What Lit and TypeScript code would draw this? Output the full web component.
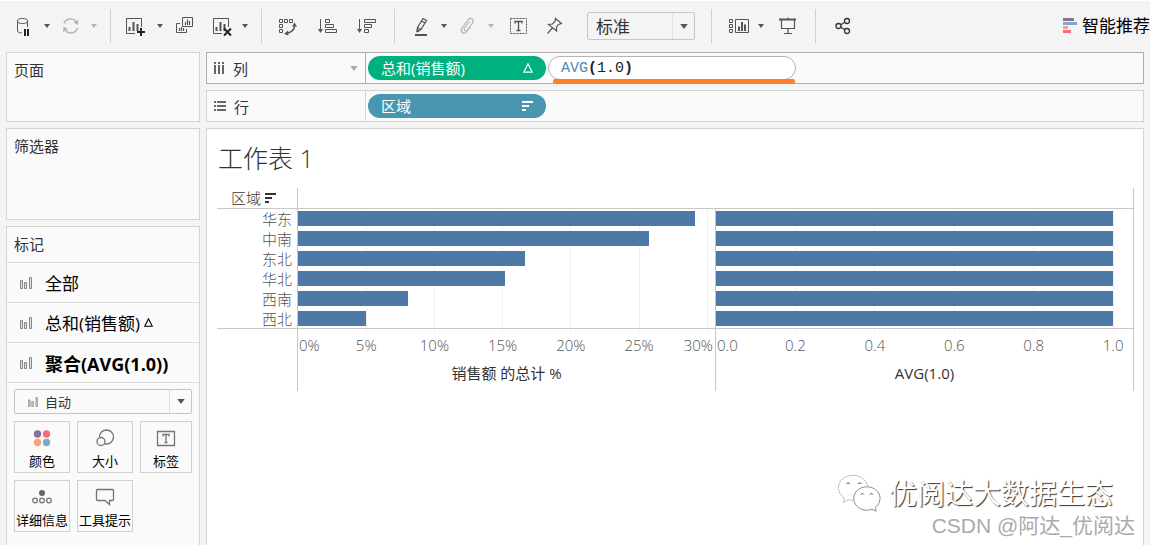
import { LitElement, html, svg, css } from "lit";
import { customElement, property } from "lit/decorators.js";

const FONT = css`"Open Sans", "Noto Sans CJK SC", sans-serif`;

const caret = html`<svg class="caret" width="6" height="4" viewBox="0 0 6 4"><path d="M0 0H6L3 4Z" fill="currentColor" /></svg>`;

const delta = (size: number) => html`<svg width=${size} height=${size} viewBox="0 0 10 10" fill="none" stroke="currentColor" stroke-width="1.2"><path d="M5 .8L9.2 9.2H.8Z" /></svg>`;

const sortGlyph = html`<svg width="11" height="10" viewBox="0 0 11 10" fill="currentColor" shape-rendering="crispEdges"><path d="M0 0H11V2H0ZM0 4H7V6H0ZM0 8H4V10H0Z" /></svg>`;

const markGlyph = html`<svg width="12" height="12" viewBox="0 0 12 12" fill="#e6e6e6" stroke="#858585"><path d="M.5 3.5H2.5V11.5H.5ZM4.5 5.5H6.5V11.5H4.5ZM9.5 .5H11.5V11.5H9.5Z" /></svg>`;

const sheetFrame = svg`<path d="M12 19.5H3.5V4.5H18.5V13" /><path d="M6.500 17V13M10.500 17V8M14.500 17V10" stroke-width="2" />`;

const icons: Record<string, unknown> = {
  data: svg`<ellipse cx="10.5" cy="7" rx="5" ry="2.5" /><path d="M5.5 7V17C6 18.3 7.5 19 10 19M15.5 7V13" /><path d="M13 15V22M16 15V22" stroke="#222" stroke-width="2" />`,
  refresh: svg`<path d="M5 9.5A7 7 0 0 1 17 7.5M18.500 14A7 7 0 0 1 6.500 16.500" stroke-width="1.4" /><path d="M19.500 5.500L19 11L14.500 8.500ZM4 18L4.500 12.500L9 15Z" fill="currentColor" stroke="none" />`,
  add: svg`<g transform="translate(-2 0)">${sheetFrame}</g><path d="M12 18H20M16 14V22" stroke="#222" stroke-width="2" />`,
  duplicate: svg`<path d="M10.500 3.500H20.500V12.500H10.500Z" /><path d="M8 9.500H4.500V18.500H14.500V15" /><path d="M13.500 11V8M15.500 11V5.500M17.500 11V7M7.500 17V14M9.500 17V13M11.500 17V14" stroke-width="1.200" />`,
  clear: svg`${sheetFrame}<path d="M14 14.500L21 21.500M21 14.500L14 21.500" stroke="#222" stroke-width="2" />`,
  swap: svg`<path d="M3.500 5.500H6.500V8.500H3.500ZM8.500 5.500H11.500V8.500H8.500ZM13.500 5.500H16.500V8.500H13.500ZM3.500 10.500H6.500V13.500H3.500ZM3.500 15.500H6.500V18.500H3.500Z" /><path d="M18.500 12C18.500 16 15 18.500 10 19.500" stroke-width="1.500" /><path d="M18.500 8.500L21 12.500H16ZM8 20L12 16.500L12.500 21.500Z" fill="currentColor" stroke="none" />`,
  asc: svg`<path d="M4.500 5V18M9.500 5.500H13.500V8.500H9.500ZM9.500 10.500H17.500V13.500H9.500ZM9.500 15.500H20.500V18.500H9.500Z" /><path d="M2 15H7L4.500 19Z" fill="currentColor" stroke="none" />`,
  desc: svg`<path d="M5.500 5V18M10.500 5.500H21.500V8.500H10.500ZM10.500 10.500H17.500V13.500H10.500ZM10.500 15.500H14.500V18.500H10.500Z" /><path d="M3 15H8L5.500 19Z" fill="currentColor" stroke="none" />`,
  pen: svg`<path d="M6 21H18" stroke-width="2" /><path d="M14 4.500L17.500 6.500L12 15.500L8 17.500L8.500 13.500ZM8.500 13.500L12 15.500M12.500 7L16 9" stroke-width="1.200" /><path d="M8 18L8.300 15.500L10.500 16.700Z" fill="currentColor" />`,
  clip: svg`<path d="M13.500 7.500L8.500 14C7 16.500 10 18 11.500 16L16.500 9C18.500 5.500 14.500 3 12.300 5.700L6 14C3.500 18.500 8.500 20.500 10.500 18L14.500 13" stroke-width="1.200" />`,
  label: svg`<path d="M3.500 4.500H19.500V19.500H3.500Z" stroke-dasharray="2 1" /><path d="M8 9.500V7.500H15V9.500M11.500 7.500V16M9.500 16.500H13.500" stroke-width="1.300" />`,
  pin: svg`<path d="M10.500 4.500L16.500 9.500L13.500 10.500L11.500 13L11.500 17L3.500 10.500L7.500 10L10 7.500ZM7.300 14L2.500 19.500" stroke-width="1.200" />`,
  cards: svg`<path d="M3.500 5.500H6.500V8.500H3.500ZM3.500 10.500H6.500V13.500H3.500ZM3.500 15.500H6.500V18.500H3.500ZM9.500 5.500H22.500V18.500H9.500Z" /><path d="M13 17V12.500M16 17V8M19 17V10.500" stroke-width="2" />`,
  present: svg`<path d="M2 5.500H19" stroke-width="2" /><path d="M4.500 6V14.500H17.500V6M11 3.500V5M11 15V19M7 19.500H15" stroke-width="1.200" />`,
  share: svg`<g stroke="#333" stroke-width="1.300"><circle cx="8.500" cy="12" r="2.500" /><circle cx="17" cy="7" r="2.500" /><circle cx="17" cy="17" r="2.500" /><path d="M10.700 10.700L14.800 8.300M10.700 13.300L14.800 15.700" /></g>`,
};

interface Mark { label: string; at: number; anchor?: string }

@customElement("tool-button")
class ToolButton extends LitElement {
  @property() icon = "";
  @property() label = "";
  @property({ type: Boolean }) menu = false;
  @property({ type: Boolean }) dim = false;
  static styles = css`
    :host { display: flex; gap: 5px; flex: none; color: #555; }
    :host([dim]) { color: #b4b4b4; }
    button { display: flex; align-items: center; justify-content: center; border: 0; padding: 0; background: none; color: inherit; width: 24px; height: 24px; }
    .drop { width: 12px; }
  `;
  render() {
    return html`<button aria-label=${this.label}>
        <svg width="24" height="24" viewBox="0 0 24 24" fill="none" stroke="currentColor">${icons[this.icon]}</svg>
      </button>
      ${this.menu ? html`<button class="drop" aria-label=${this.label + "菜单"}>${caret}</button>` : ""}`;
  }
}

@customElement("bar-pane")
class BarPane extends LitElement {
  @property({ attribute: false }) values: number[] = [];
  @property({ attribute: false }) ticks: Mark[] = [];
  @property({ type: Number }) max = 1;
  @property() caption = "";
  static styles = css`
    :host { display: block; min-width: 0; border-left: 1px solid #c8c8c8; }
    svg { display: block; font-family: ${FONT}; font-size: 15px; }
    .grid { stroke: #f0f0f0; shape-rendering: crispEdges; }
    .bar { fill: #4e79a7; shape-rendering: crispEdges; }
    .rule { stroke: #c8c8c8; shape-rendering: crispEdges; }
    .tick { fill: #555; font-weight: 300; }
    .caption { fill: #333; font-weight: 400; }
  `;
  render() {
    const pct = (v: number) => `${(v / this.max) * 100}%`;
    return html`<svg width="100%" height="182" role="img" aria-label=${this.caption}>
      ${this.ticks.map((t) => (t.at > 0 ? svg`<line class="grid" x1=${pct(t.at)} x2=${pct(t.at)} y1="0" y2="124" />` : ""))}
      ${this.values.map((v, i) => svg`<rect class="bar" x="0" y=${i * 20 + 2} width=${pct(v)} height="15" />`)}
      <line class="rule" x1="0" x2="100%" y1="119.5" y2="119.5" />
      ${this.ticks.map((t) => {
        const x = t.anchor === "start" ? "1" : t.anchor === "end" ? "99.500%" : pct(t.at);
        return svg`<text class="tick" x=${x} y="142" text-anchor=${t.anchor ?? "middle"}>${t.label}</text>`;
      })}
      <text class="caption" x="50%" y="170" text-anchor="middle">${this.caption}</text>
    </svg>`;
  }
}

@customElement("app-root")
class AppRoot extends LitElement {
  static styles = css`
    :host { display: block; font-family: ${FONT}; font-size: 15px; color: #333; }
    * { box-sizing: border-box; }
    button, select, input { font-family: inherit; color: inherit; margin: 0; }
    .page { position: relative; display: flex; flex-direction: column; height: 100vh; overflow: hidden; background: #f4f4f4; border-top: 1px solid #fff; }
    .toolbar { display: flex; align-items: center; flex: none; height: 50px; padding-left: 12px; margin-bottom: 1px; }
    .s6 { margin-left: 6px; }
    .s10 { margin-left: 10px; }
    .s14 { margin-left: 14px; }
    .s16 { margin-left: 16px; }
    .sep { flex: none; width: 1px; height: 34px; background: #cfcfcf; }
    .select { display: grid; grid-template-columns: minmax(0, 1fr) 22px; align-items: center; border: 1px solid #c6c6c6; border-radius: 2px; color: #555; }
    .select select { grid-area: 1 / 1 / 2 / 3; appearance: none; width: 100%; height: 100%; border: 0; background: none; color: #333; }
    .select .drop { grid-area: 1 / 2; display: flex; align-items: center; justify-content: center; height: 100%; border-left: 1px solid #e0e0e0; pointer-events: none; }
    .select .caret { width: 8px; height: 5px; }
    .fit { flex: none; width: 108px; height: 28px; margin-left: 18px; }
    .fit select { font-size: 17px; padding: 0 8px; }
    .smart { display: flex; align-items: center; gap: 5px; margin-left: auto; flex: none; border: 0; background: none; padding: 0; font-size: 17px; line-height: 24px; color: #000; }
    .work { display: grid; grid-template-columns: 194px minmax(0, 1fr); gap: 6px; padding: 0 6px; flex: 1; min-height: 0; }
    .side, .main { display: flex; flex-direction: column; gap: 6px; min-height: 0; }
    .card { background: #fafafa; border: 1px solid #d4d4d4; }
    .card h2 { margin: 0; padding: 6px 7px; font-size: 15px; font-weight: 400; line-height: 23px; }
    .pages { height: 70px; flex: none; }
    .filters { height: 92px; flex: none; }
    .marks { flex: 1; border-bottom: 0; }
    .layer { display: flex; align-items: center; width: 100%; height: 40px; border: 0; border-top: 1px solid #dcdcdc; background: none; padding: 0 13px; font-size: 17px; color: #000; text-align: left; }
    .layer span { margin: 0 4px 0 13px; }
    .layer.on { font-weight: 700; font-size: 18px; }
    .panel { border-top: 1px solid #dcdcdc; padding: 6px 7px; }
    .kind { height: 25px; margin-bottom: 7px; }
    .kind select { font-size: 13px; padding: 0 30px; }
    .kind .glyph { grid-area: 1 / 1; display: flex; padding-left: 13px; pointer-events: none; }
    .tiles { display: grid; grid-template-columns: 56px 56px 52px; gap: 7px; }
    .tile { display: flex; flex-direction: column; align-items: center; gap: 4px; height: 52px; border: 1px solid #d0d0d0; background: none; padding: 6px 0 0; font-size: 13px; line-height: 18px; white-space: nowrap; color: #000; }
    .shelf { display: grid; grid-template-columns: 159px minmax(0, 1fr); height: 32px; flex: none; }
    .shelf.active { border-color: #adadad; }
    .name { display: flex; align-items: center; gap: 8px; padding: 0 7px; border-right: 1px solid #d4d4d4; color: #333; }
    .active .name { border-color: #adadad; }
    .name .caret { margin-left: auto; color: #aaa; width: 8px; height: 5px; }
    .pills { display: flex; align-items: center; gap: 2px; padding: 0 2px; }
    .pill { display: flex; align-items: center; justify-content: space-between; width: 178px; height: 24px; border: 0; border-radius: 12px; padding: 0 13px; font-size: 15px; line-height: 24px; color: #fff; }
    .measure { background: #00b180; }
    .dimension { background: #4996b2; }
    .formula { position: relative; display: grid; align-items: center; width: 248px; height: 24px; border: 1px solid #b4b4b4; border-radius: 12px; background: #fff; padding: 0 12px; font: 15px "Liberation Mono", monospace; color: #222; }
    .formula span, .formula input { grid-area: 1 / 1; }
    .formula input { width: 100%; border: 0; padding: 0; outline: 0; background: none; font: inherit; color: transparent; caret-color: #222; }
    .formula i { font-style: normal; color: #4a8bb0; }
    .stroke { position: absolute; left: 4px; right: 0; bottom: -5px; height: 5px; border-radius: 2px; background: #ff7f27; }
    .sheet { flex: 1; min-height: 0; background: #fff; border-bottom: 0; padding: 12px 9px 0 10px; }
    .sheet h1 { margin: 0 1px; font-size: 25px; line-height: 34px; font-weight: 300; color: #333; }
    .chart { display: grid; grid-template-columns: 80px minmax(0, 1fr) minmax(0, 1fr); margin-top: 13px; border-right: 1px solid #c8c8c8; font-weight: 300; }
    .field { display: flex; align-items: center; justify-content: flex-end; gap: 4px; height: 21px; padding-right: 21px; border-bottom: 1px solid #c8c8c8; color: #333; line-height: 20px; }
    .blank { grid-column: 2 / 4; border-left: 1px solid #c8c8c8; border-bottom: 1px solid #c8c8c8; }
    .regions { margin: 0; padding: 0 5px 0 0; list-style: none; text-align: right; height: 120px; border-bottom: 1px solid #c8c8c8; color: #555; line-height: 20px; }
    .brand { position: absolute; right: 37px; bottom: 31px; display: flex; align-items: center; gap: 8px; font-size: 28px; line-height: 42px; color: #fff; text-shadow: 1px 1px 1px #333; }
    .credit { position: absolute; right: 15px; bottom: 4px; font-size: 21px; line-height: 30px; font-family: "Liberation Sans", "Noto Sans CJK SC", sans-serif; color: #aaa; }
  `;

  tile(label: string, icon: unknown) {
    return html`<button class="tile"><svg width="22" height="20" viewBox="0 0 22 20" fill="none" stroke="#757575">${icon}</svg>${label}</button>`;
  }

  render() {
    const share: Mark[] = [
      { label: "0%", at: 0, anchor: "start" },
      ...[5, 10, 15, 20, 25].map((n) => ({ label: `${n}%`, at: n })),
      { label: "30%", at: 30, anchor: "end" },
    ];
    const avg: Mark[] = [
      { label: "0.0", at: 0, anchor: "start" },
      ...[0.2, 0.4, 0.6, 0.8, 1].map((n) => ({ label: n.toFixed(1), at: n })),
    ];
    return html`<div class="page">
      <header class="toolbar">
        <tool-button icon="data" label="数据源" menu></tool-button>
        <tool-button class="s6" icon="refresh" label="刷新" menu dim></tool-button>
        <div class="sep s10"></div>
        <tool-button class="s14" icon="add" label="新建工作表" menu></tool-button>
        <tool-button class="s6" icon="duplicate" label="复制工作表"></tool-button>
        <tool-button class="s14" icon="clear" label="清除工作表" menu></tool-button>
        <div class="sep s10"></div>
        <tool-button class="s14" icon="swap" label="交换行和列"></tool-button>
        <tool-button class="s16" icon="asc" label="升序"></tool-button>
        <tool-button class="s14" icon="desc" label="降序"></tool-button>
        <div class="sep s16"></div>
        <tool-button class="s14" icon="pen" label="突出显示" menu></tool-button>
        <tool-button class="s6" icon="clip" label="分组" menu dim></tool-button>
        <tool-button class="s10" icon="label" label="显示标签"></tool-button>
        <tool-button class="s14" icon="pin" label="固定轴"></tool-button>
        <div class="select fit">
          <select aria-label="适合"><option>标准</option></select>
          <span class="drop">${caret}</span>
        </div>
        <div class="sep s16"></div>
        <tool-button class="s14" icon="cards" label="显示卡" menu></tool-button>
        <tool-button class="s10" icon="present" label="演示模式"></tool-button>
        <div class="sep s14"></div>
        <tool-button class="s14" icon="share" label="共享"></tool-button>
        <button class="smart">
          <svg width="14" height="17" viewBox="0 0 14 17" shape-rendering="crispEdges"><path d="M0 0H11V3H0Z" fill="#8a7099" /><path d="M0 4H14V7H0Z" fill="#84a5cd" /><path d="M0 8H5V11H0Z" fill="#f4a582" /><path d="M0 12H8V15H0Z" fill="#f96c7c" /></svg>智能推荐
        </button>
      </header>
      <div class="work">
        <aside class="side">
          <section class="card pages"><h2>页面</h2></section>
          <section class="card filters"><h2>筛选器</h2></section>
          <section class="card marks">
            <h2>标记</h2>
            <button class="layer">${markGlyph}<span>全部</span></button>
            <button class="layer">${markGlyph}<span>总和(销售额)</span>${delta(9)}</button>
            <button class="layer on">${markGlyph}<span>聚合(AVG(1.0))</span></button>
            <div class="panel">
              <div class="select kind">
                <select aria-label="标记类型"><option>自动</option></select>
                <span class="glyph"><svg width="10" height="10" viewBox="0 0 12 12" fill="#c4c4c4" stroke="#999"><path d="M.5 3.500H2.500V11.500H.5ZM4.500 5.500H6.500V11.500H4.500ZM9.500 .5H11.500V11.500H9.500Z" /></svg></span>
                <span class="drop">${caret}</span>
              </div>
              <div class="tiles">
                ${this.tile("颜色", svg`<g stroke="none"><circle cx="6.500" cy="6" r="3.700" fill="#8a7099" /><circle cx="15.500" cy="6" r="3.700" fill="#f96c7c" /><circle cx="6.500" cy="14.500" r="3.700" fill="#f1a77c" /><circle cx="15.500" cy="14.500" r="3.700" fill="#82a6cd" /></g>`)}
                ${this.tile("大小", svg`<circle cx="12.500" cy="9" r="7" stroke-width="1.300" /><circle cx="7" cy="13.500" r="4" fill="#fafafa" stroke-width="1.300" />`)}
                ${this.tile("标签", svg`<path d="M2.500 3.500H19.500V17.500H2.500Z" stroke-width="1.300" /><path d="M8 8.500V6.500H14V8.500M11 6.500V14M9.500 14.500H12.500" stroke-width="1.300" />`)}
                ${this.tile("详细信息", svg`<circle cx="11" cy="6" r="3" fill="#666" stroke="none" /><circle cx="4" cy="13.500" r="2.300" stroke-width="1.300" /><circle cx="11" cy="13.500" r="2.300" stroke-width="1.300" /><circle cx="18" cy="13.500" r="2.300" stroke-width="1.300" />`)}
                ${this.tile("工具提示", svg`<path d="M3.500 2.500H18.500Q19.500 2.500 19.500 3.500V12.500Q19.500 13.500 18.500 13.500H15.500V17.500L11 13.500H3.500Q2.500 13.500 2.500 12.500V3.500Q2.500 2.500 3.500 2.500Z" stroke-width="1.300" />`)}
              </div>
            </div>
          </section>
        </aside>
        <main class="main">
          <section class="card shelf active">
            <div class="name">
              <svg width="11" height="12" viewBox="0 0 11 12" fill="#666" shape-rendering="crispEdges"><path d="M0 0H2V2H0ZM4 0H6V2H4ZM8 0H10V2H8ZM0 3H2V12H0ZM4 3H6V12H4ZM8 3H10V12H8Z" /></svg>列${caret}
            </div>
            <div class="pills">
              <button class="pill measure">总和(销售额)${delta(10)}</button>
              <div class="formula">
                <span aria-hidden="true"><i>AVG</i><b>(</b>1.0<b>)</b></span>
                <input aria-label="列公式" value="AVG(1.0)" spellcheck="false" />
                <div class="stroke"></div>
              </div>
            </div>
          </section>
          <section class="card shelf">
            <div class="name">
              <svg width="12" height="10" viewBox="0 0 12 10" fill="#666" shape-rendering="crispEdges"><path d="M0 0H2V2H0ZM0 4H2V6H0ZM0 8H2V10H0ZM3 0H12V2H3ZM3 4H12V6H3ZM3 8H12V10H3Z" /></svg>行
            </div>
            <div class="pills"><button class="pill dimension">区域${sortGlyph}</button></div>
          </section>
          <section class="card sheet">
            <h1>工作表 1</h1>
            <div class="chart">
              <div class="field">区域${sortGlyph}</div>
              <div class="blank"></div>
              <ul class="regions">${["华东", "中南", "东北", "华北", "西南", "西北"].map((r) => html`<li>${r}</li>`)}</ul>
              <bar-pane .values=${[29.1, 25.7, 16.64, 15.17, 8.06, 4.98]} .ticks=${share} .max=${30.57} caption="销售额 的总计 %"></bar-pane>
              <bar-pane .values=${[1, 1, 1, 1, 1, 1]} .ticks=${avg} .max=${1.05} caption="AVG(1.0)"></bar-pane>
            </div>
          </section>
        </main>
      </div>
      <div class="brand">
        <svg width="44" height="40" viewBox="0 0 46 40" fill="#fff" stroke="#888"><path d="M17 1.500C8 1.500 1.500 7.500 1.500 14.500C1.500 19 4 23 8 25.500L6.500 30L12 27Q15 28 18 27.500C26 27.500 32 21 32 14.500C32 7.500 25 1.500 17 1.500Z" stroke-dasharray="2 1" stroke-width=".8" /><path d="M31 13.500C23.500 13.500 17.500 19 17.500 25.500C17.500 32.500 23.500 38 31 38Q34 38 36.500 37L41 39L40 35C43 33 45 29.500 45 25.500C45 19 39 13.500 31 13.500Z" /><path d="M10 10.500A2 2 0 0 1 13.500 10.500M22 10.500A2 2 0 0 1 25.500 10.500M25 21.500A1.700 1.700 0 0 1 28 21.500M34.500 21.500A1.700 1.700 0 0 1 37.500 21.500" fill="none" stroke="#444" /></svg>
        <span>优阅达大数据生态</span>
      </div>
      <div class="credit">CSDN @阿达_优阅达</div>
    </div>`;
  }
}
